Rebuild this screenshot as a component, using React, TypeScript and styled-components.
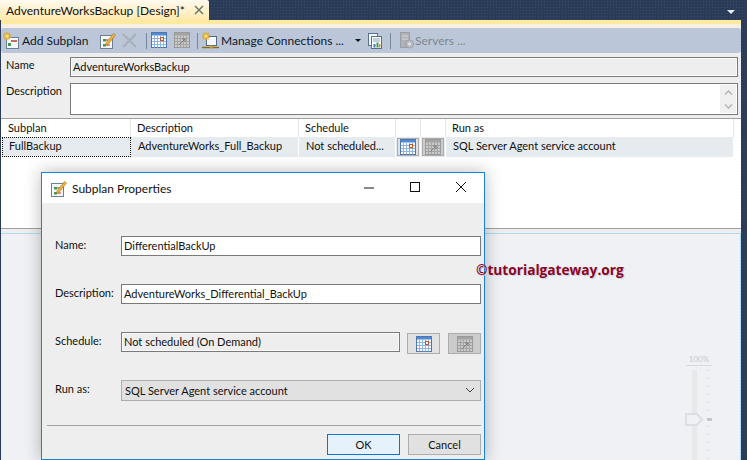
import { createGlobalStyle, styled } from "styled-components";

const GlobalStyle = createGlobalStyle`
  html, body {
    margin: 0;
    padding: 0;
    width: 747px;
    height: 460px;
    overflow: hidden;
  }
  * {
    box-sizing: border-box;
  }
`;

const UI_FONT = `Lato, "Noto Sans", sans-serif`;

const Page = styled.div`
  position: relative;
  width: 747px;
  height: 460px;
  overflow: hidden;
  font-family: ${UI_FONT};
  font-size: 11px;
  color: #111111;
  background-color: #2a3b58;
  background-image: radial-gradient(#3a4c6c 0.7px, transparent 0.8px);
  background-size: 3px 3px;
`;

const TabStrip = styled.div`
  height: 20px;
  display: flex;
`;

const Tab = styled.div`
  width: 209px;
  display: flex;
  align-items: center;
  justify-content: space-between;
  padding: 0 5px 0 6px;
  font-size: 12px;
  white-space: nowrap;
  background: linear-gradient(#fffaf0, #ffe9ab);
  border-top-right-radius: 2px;
`;

const TabClose = styled.svg`
  width: 10px;
  height: 10px;
`;

const MenuArrow = styled.div`
  position: absolute;
  top: 10px;
  left: 727px;
  border-left: 4px solid transparent;
  border-right: 4px solid transparent;
  border-top: 4px solid #e8ecf2;
`;

const Document = styled.div`
  height: 440px;
  margin: 0 6px 0 1px;
  display: flex;
  flex-direction: column;
  background: #eeeeee;
`;

const YellowBar = styled.div`
  height: 8px;
  background: linear-gradient(#fde99f 0, #fde99f 4px, #f5f0e2 4px, #f5f0e2 100%);
`;

const Toolbar = styled.div`
  height: 25px;
  display: flex;
  align-items: center;
  padding-left: 2px;
  background: #bbc7d8;
  border-radius: 3px;
`;

const ToolIcon = styled.svg<{ $left?: number }>`
  width: 17px;
  height: 17px;
  flex: none;
  margin-left: ${(p) => p.$left ?? 0}px;
`;

const ToolText = styled.span<{ $left: number; $width: number; $muted?: boolean }>`
  margin-left: ${(p) => p.$left}px;
  width: ${(p) => p.$width}px;
  flex: none;
  white-space: nowrap;
  font-size: 12px;
  color: ${(p) => (p.$muted ? "#7d8791" : "#101828")};
`;

const ToolSep = styled.div<{ $left: number }>`
  width: 1px;
  height: 16px;
  flex: none;
  margin-left: ${(p) => p.$left}px;
  background: #74879f;
`;

const DropCaret = styled.div`
  flex: none;
  border-left: 3px solid transparent;
  border-right: 3px solid transparent;
  border-top: 3px solid #111;
`;

const PropsPanel = styled.div`
  height: 65px;
  padding: 4px 3px 0 5px;
  display: grid;
  grid-template-columns: 64px 1fr;
  grid-template-rows: 20px 32px;
  row-gap: 6px;
`;

const PropLabel = styled.div`
  line-height: 16px;
`;

const NameField = styled.div`
  border: 1px solid #7a7a7a;
  box-shadow: inset 0 0 0 1px #fbfbfb;
  background: #eeeeee;
  padding-left: 2px;
  line-height: 18px;
`;

const DescField = styled.div`
  border: 1px solid #7a7a7a;
  background: #ffffff;
  display: flex;
  justify-content: flex-end;
`;

const ScrollGutter = styled.div`
  width: 16px;
  margin: 1px;
  background: #f0f0f0;
  display: flex;
  flex-direction: column;
  justify-content: space-between;
  align-items: center;
  padding: 4px 0 3px;
`;

const ScrollChevron = styled.svg`
  width: 9px;
  height: 7px;
`;

const GridPanel = styled.div`
  height: 111px;
  background: #ffffff;
  border-top: 1px solid #a0a0a0;
  border-bottom: 1px solid #a0a0a0;
  padding-left: 1px;
`;

const GRID_COLUMNS = "129px 168px 97px 25px 25px 288px";

const HeaderRow = styled.div`
  height: 18px;
  display: grid;
  grid-template-columns: ${GRID_COLUMNS};
`;

const HeaderCell = styled.div`
  border-right: 1px solid #e4e4e4;
  padding-left: 6px;
  line-height: 17px;
`;

const DataRow = styled.div`
  height: 20px;
  display: grid;
  grid-template-columns: ${GRID_COLUMNS};
`;

const DataCell = styled.div<{ $focused?: boolean }>`
  background: #e6ebf0;
  border-right: 1px solid #ffffff;
  padding-left: 7px;
  line-height: 18px;
  white-space: nowrap;
  overflow: hidden;
  outline: ${(p) => (p.$focused ? "1px dotted #111" : "none")};
  outline-offset: -1px;
`;

const ButtonCell = styled.div`
  background: #e6ebf0;
  border-right: 1px solid #ffffff;
  padding: 1px;
`;

const GridButton = styled.div<{ $disabled?: boolean }>`
  width: 100%;
  height: 100%;
  display: flex;
  align-items: center;
  justify-content: center;
  border: 1px solid #adadad;
  background: ${(p) => (p.$disabled ? "#cccccc" : "#e1e1e1")};
`;

const Designer = styled.div`
  flex: 1;
  margin-top: 4px;
  background: #eff1f4;
  border-top: 1px solid #aedcf2;
  border-right: 1px solid #aedcf2;
`;

const Dialog = styled.div`
  position: absolute;
  left: 41px;
  top: 172px;
  width: 444px;
  height: 288px;
  background: #eeeeee;
  border: 1px solid #1883d7;
  box-shadow: 0 0 16px rgba(0, 0, 0, 0.28);
  display: flex;
  flex-direction: column;
`;

const TitleBar = styled.div`
  height: 30px;
  flex: none;
  background: #ffffff;
  display: flex;
  align-items: center;
  padding-left: 8px;
`;

const TitleText = styled.div`
  margin-left: 5px;
  font-size: 12px;
  flex: 1;
`;

const WindowButton = styled.svg`
  width: 46px;
  height: 30px;
  flex: none;
`;

const Form = styled.div`
  flex: 1;
  padding: 33px 3px 0 13px;
  display: grid;
  grid-template-columns: 66px 1fr;
  grid-auto-rows: 20px;
  row-gap: 28px;
  align-items: center;
`;

const FieldLabel = styled.div`
  line-height: 16px;
  margin-top: -2px;
`;

const TextField = styled.div<{ $readOnly?: boolean }>`
  height: 20px;
  flex: 1;
  border: 1px solid #7a7a7a;
  background: ${(p) => (p.$readOnly ? "#eeeeee" : "#ffffff")};
  box-shadow: ${(p) => (p.$readOnly ? "inset 0 0 0 1px #fafafa" : "none")};
  padding-left: 2px;
  line-height: 18px;
  white-space: nowrap;
`;

const ScheduleRow = styled.div`
  display: flex;
  align-items: flex-start;
  height: 20px;
`;

const ScheduleButton = styled.div<{ $disabled?: boolean }>`
  width: 33px;
  height: 21px;
  margin-left: ${(p) => (p.$disabled ? 8 : 7)}px;
  margin-top: 1px;
  flex: none;
  display: flex;
  align-items: center;
  justify-content: center;
  border: 1px solid #adadad;
  background: ${(p) => (p.$disabled ? "#cccccc" : "#e1e1e1")};
`;

const SelectBox = styled.div`
  height: 21px;
  border: 1px solid #adadad;
  background: #e1e1e1;
  display: flex;
  align-items: center;
  justify-content: space-between;
  padding: 0 5px 0 3px;
`;

const Footer = styled.div`
  flex: none;
  height: 34px;
  margin: 0 3px 0 5px;
  border-top: 1px solid #a0a0a0;
  display: flex;
  justify-content: flex-end;
  gap: 8px;
  padding-top: 8px;
`;

const DialogButton = styled.button<{ $primary?: boolean }>`
  width: 73px;
  height: 21px;
  padding: 0;
  font-family: ${UI_FONT};
  font-size: 11px;
  color: #111111;
  border: 1px solid ${(p) => (p.$primary ? "#0078d7" : "#adadad")};
  background: ${(p) => (p.$primary ? "#e5f1fb" : "#e1e1e1")};
`;

const Watermark = styled.div`
  position: absolute;
  left: 476px;
  top: 261px;
  font-family: "Open Sans", "Noto Sans", sans-serif;
  font-weight: 700;
  font-size: 13.7px;
  line-height: 18px;
  color: #8c0420;
  text-shadow: 1px 1px 0 #c9d3e6;
  white-space: nowrap;
`;

const ZoomSlider = styled.div`
  position: absolute;
  left: 686px;
  top: 353px;
  width: 26px;
  height: 107px;
`;

const ZoomLabel = styled.div`
  font-size: 8px;
  line-height: 10px;
  padding-top: 1px;
  text-align: center;
  color: #c6cacd;
  border-bottom: 1px solid #d6d8db;
  height: 13px;
`;

const ZoomTrack = styled.div`
  position: absolute;
  left: 6px;
  top: 17px;
  bottom: 0;
  width: 5px;
  background: #e6e8ea;
`;

const ZoomTicks = styled.div`
  position: absolute;
  left: 20px;
  top: 17px;
  bottom: 0;
  width: 3px;
  background: repeating-linear-gradient(#e3e5e8 0, #e3e5e8 1px, transparent 1px, transparent 8px);
`;

const ZoomThumb = styled.svg`
  position: absolute;
  left: -1px;
  top: 60px;
  width: 19px;
  height: 13px;
`;

const ZoomMark = styled.div`
  position: absolute;
  left: 21px;
  top: 65px;
  width: 5px;
  height: 3px;
  background: #c4c6c8;
`;

function Calendar({ disabled }: { disabled?: boolean }) {
  const head = disabled ? "#a4a4a4" : "#4f8ad6";
  const line = disabled ? "#a4a4a4" : "#8db2e4";
  const edge = disabled ? "#9a9a9a" : "#4f76ad";
  return (
    <svg width="16" height="16" viewBox="0 0 16 16">
      <rect x="0.5" y="0.5" width="15" height="15" fill={disabled ? "#c9c9c9" : "#ffffff"} stroke={edge} />
      <rect x="1" y="1" width="14" height="2.5" fill={head} />
      <path
        d="M1 6.5h14M1 9.500h14M1 12.500h14M3.500 3.500v12M6.500 3.500v12M9.500 3.500v12M12.500 3.500v12"
        stroke={line}
        strokeWidth="1"
        fill="none"
      />
      {disabled ? (
        <path d="M5 13l6-6M8 7h3v3" stroke="#7c7c7c" strokeWidth="1" fill="none" />
      ) : (
        <rect x="9.500" y="5.500" width="3" height="3" fill="#fff" stroke="#d2521c" />
      )}
    </svg>
  );
}

function Sparkle() {
  return (
    <g>
      <path
        d="M4 0l.8 2 1.700-1.200-.6 2 2.100.2-1.700 1.200 1.700 1.200-2.100.2.6 2-1.700-1.200L4 8.400l-.8-2-1.700 1.200.6-2-2.100-.2L1.700 4.200 0 3l2.100-.2-.6-2L3.200 2z"
        fill="#f5bd3a"
        stroke="#cf9420"
        strokeWidth="0.4"
      />
      <circle cx="4" cy="4.200" r="1.400" fill="#ffe27a" />
    </g>
  );
}

function EditDocIcon() {
  return (
    <svg width="17" height="17" viewBox="0 0 17 17" style={{ flex: "none" }}>
      <rect x="1.500" y="3.500" width="12" height="13" fill="#f4f7fb" stroke="#6d7f95" />
      <rect x="4" y="7" width="3" height="2.500" fill="#3f9c4c" />
      <rect x="4" y="12" width="3" height="2.500" fill="#3f9c4c" />
      <path d="M7 8h4M7 13h4" stroke="#c0392b" strokeWidth="1.200" />
      <path d="M7 11L14.500 1.500l2 1.500L9 12.500l-2.500 1z" fill="#f0b13c" stroke="#a9701a" strokeWidth="0.600" />
    </svg>
  );
}

function App() {
  return (
    <Page>
      <GlobalStyle />
      <TabStrip>
        <Tab>
          AdventureWorksBackup [Design]*
          <TabClose viewBox="0 0 10 10">
            <path d="M1 1l8 8M9 1l-8 8" stroke="#6b7a66" strokeWidth="1.500" />
          </TabClose>
        </Tab>
      </TabStrip>
      <MenuArrow />
      <Document>
        <YellowBar />
        <Toolbar>
          <ToolIcon viewBox="0 0 17 17">
            <rect x="3.500" y="5.500" width="12" height="11" fill="#f4f7fb" stroke="#6d7f95" />
            <rect x="5" y="11" width="3" height="3" fill="#3f9c4c" />
            <path d="M8 9h6" stroke="#c0392b" strokeWidth="1.500" />
            <Sparkle />
          </ToolIcon>
          <ToolText $left={2} $width={77}>Add Subplan</ToolText>
          <EditDocIcon />
          <ToolIcon viewBox="0 0 17 17" $left={5}>
            <path d="M2 2l13 13M15 2L2 15" stroke="#a9b0ba" strokeWidth="2.200" />
          </ToolIcon>
          <ToolSep $left={8} />
          <ToolIcon as="div" $left={4}><Calendar /></ToolIcon>
          <ToolIcon as="div" $left={6}><Calendar disabled /></ToolIcon>
          <ToolSep $left={6} />
          <ToolIcon viewBox="0 0 17 17" $left={4}>
            <rect x="4.500" y="4.500" width="10" height="9" fill="#f4f7fb" stroke="#55697f" />
            <path d="M0 15.500h17" stroke="#8a6a1c" strokeWidth="1.400" />
            <rect x="8" y="13.500" width="2.500" height="3" fill="#c8a23a" />
            <Sparkle />
          </ToolIcon>
          <ToolText $left={2} $width={134}>Manage Connections ...</ToolText>
          <DropCaret />
          <ToolIcon viewBox="0 0 17 17" $left={6}>
            <rect x="1.500" y="1.500" width="9" height="12" fill="#f4f7fb" stroke="#56708f" />
            <rect x="4.500" y="4.500" width="10" height="12" fill="#fbfcfe" stroke="#56708f" />
            <path d="M6 7h7M6 9h7" stroke="#8fa3bb" />
            <rect x="6.500" y="12" width="2" height="3.500" fill="#3f78c4" />
            <rect x="9.500" y="10.500" width="2" height="5" fill="#3f9c4c" />
            <rect x="12" y="12" width="1.500" height="3.500" fill="#d9962c" />
          </ToolIcon>
          <ToolSep $left={6} />
          <ToolIcon viewBox="0 0 17 17" $left={7}>
            <rect x="2.500" y="0.500" width="9" height="15" fill="#aeb2b7" stroke="#9b9fa4" />
            <path d="M4 4h6M4 7h6" stroke="#d5d8dc" />
            <circle cx="11.500" cy="12" r="4" fill="#b9bcc0" stroke="#9b9fa4" />
            <circle cx="11.500" cy="12" r="1.500" fill="#e2e4e6" />
          </ToolIcon>
          <ToolText $left={0} $width={60} $muted>Servers ...</ToolText>
        </Toolbar>
        <PropsPanel>
          <PropLabel>Name</PropLabel>
          <NameField>AdventureWorksBackup</NameField>
          <PropLabel>Description</PropLabel>
          <DescField>
            <ScrollGutter>
              <ScrollChevron viewBox="0 0 9 7">
                <path d="M1 5.500l3.500-3.500 3.500 3.500" stroke="#b4b4b4" strokeWidth="1.500" fill="none" />
              </ScrollChevron>
              <ScrollChevron viewBox="0 0 9 7">
                <path d="M1 1.500L4.500 5 8 1.500" stroke="#b4b4b4" strokeWidth="1.500" fill="none" />
              </ScrollChevron>
            </ScrollGutter>
          </DescField>
        </PropsPanel>
        <GridPanel>
          <HeaderRow>
            <HeaderCell>Subplan</HeaderCell>
            <HeaderCell>Description</HeaderCell>
            <HeaderCell>Schedule</HeaderCell>
            <HeaderCell />
            <HeaderCell />
            <HeaderCell>Run as</HeaderCell>
          </HeaderRow>
          <DataRow>
            <DataCell $focused>FullBackup</DataCell>
            <DataCell>AdventureWorks_Full_Backup</DataCell>
            <DataCell>Not scheduled...</DataCell>
            <ButtonCell>
              <GridButton><Calendar /></GridButton>
            </ButtonCell>
            <ButtonCell>
              <GridButton $disabled><Calendar disabled /></GridButton>
            </ButtonCell>
            <DataCell>SQL Server Agent service account</DataCell>
          </DataRow>
        </GridPanel>
        <Designer />
      </Document>

      <ZoomSlider>
        <ZoomLabel>100%</ZoomLabel>
        <ZoomTrack />
        <ZoomTicks />
        <ZoomThumb viewBox="0 0 19 13">
          <path d="M1 1h11l5 5.500-5 5.500H1z" fill="#eff1f4" stroke="#dcdee1" strokeWidth="2" />
        </ZoomThumb>
        <ZoomMark />
      </ZoomSlider>

      <Dialog>
        <TitleBar>
          <EditDocIcon />
          <TitleText>Subplan Properties</TitleText>
          <WindowButton viewBox="0 0 46 30">
            <path d="M18 15h10" stroke="#111" />
          </WindowButton>
          <WindowButton viewBox="0 0 46 30">
            <rect x="18.500" y="9.500" width="9" height="9" fill="none" stroke="#111" />
          </WindowButton>
          <WindowButton viewBox="0 0 46 30">
            <path d="M18 9l10 10M28 9L18 19" stroke="#111" fill="none" />
          </WindowButton>
        </TitleBar>
        <Form>
          <FieldLabel>Name:</FieldLabel>
          <TextField>DifferentialBackUp</TextField>
          <FieldLabel>Description:</FieldLabel>
          <TextField>AdventureWorks_Differential_BackUp</TextField>
          <FieldLabel>Schedule:</FieldLabel>
          <ScheduleRow>
            <TextField $readOnly>Not scheduled (On Demand)</TextField>
            <ScheduleButton><Calendar /></ScheduleButton>
            <ScheduleButton $disabled><Calendar disabled /></ScheduleButton>
          </ScheduleRow>
          <FieldLabel>Run as:</FieldLabel>
          <SelectBox>
            SQL Server Agent service account
            <svg width="10" height="6" viewBox="0 0 10 6">
              <path d="M1 1l4 4 4-4" stroke="#444" fill="none" />
            </svg>
          </SelectBox>
        </Form>
        <Footer>
          <DialogButton $primary>OK</DialogButton>
          <DialogButton>Cancel</DialogButton>
        </Footer>
      </Dialog>

      <Watermark>©tutorialgateway.org</Watermark>
    </Page>
  );
}

export default App;
